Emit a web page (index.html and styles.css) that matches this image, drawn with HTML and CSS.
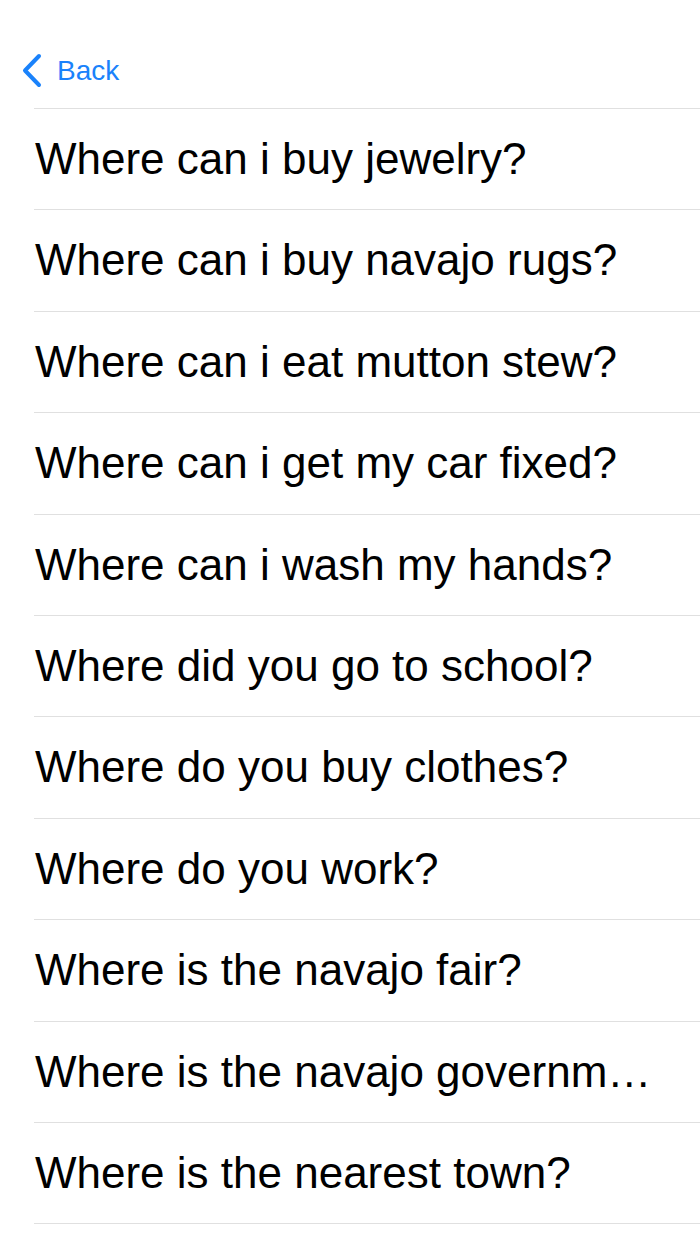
FILE: index.html
```html
<!DOCTYPE html>
<html lang="en">
<head>
<meta charset="UTF-8">
<meta name="viewport" content="width=device-width, initial-scale=1.0">
<title>Where questions</title>
<link rel="stylesheet" href="styles.css">
</head>
<body>
  <div class="navbar">
    <a class="back" href="#">
      <svg class="chevron" width="24" height="36" viewBox="0 0 24 36">
        <path d="M18 3 L4 17.5 L18 32" fill="none" stroke="#1a82fb" stroke-width="4" stroke-linecap="round" stroke-linejoin="round"/>
      </svg>
      <span>Back</span>
    </a>
  </div>
  <ul class="list">
    <li>Where can i buy jewelry?</li>
    <li>Where can i buy navajo rugs?</li>
    <li>Where can i eat mutton stew?</li>
    <li>Where can i get my car fixed?</li>
    <li>Where can i wash my hands?</li>
    <li>Where did you go to school?</li>
    <li>Where do you buy clothes?</li>
    <li>Where do you work?</li>
    <li>Where is the navajo fair?</li>
    <li>Where is the navajo government located?</li>
    <li>Where is the nearest town?</li>
  </ul>
</body>
</html>
```

FILE: styles.css
```css
body {
  margin: 0;
  background-color: #fff;
  font-family: "Liberation Sans", Arial, sans-serif;
  color: #000;
}
.navbar {
  height: 108px;
  display: flex;
  align-items: center;
  padding: 34px 0 0 21px;
  box-sizing: border-box;
}
.back {
  display: flex;
  align-items: center;
  gap: 12px;
  color: #1a82fb;
  text-decoration: none;
  font-size: 28px;
}
.chevron {
  display: block;
}
.list {
  list-style: none;
  margin: 0 0 0 34px;
  padding: 0;
  border-top: 1px solid #e0e0e0;
}
.list li {
  height: 101.4px;
  box-sizing: border-box;
  border-bottom: 1px solid #e0e0e0;
  font-size: 44px;
  line-height: 100px;
  padding: 0 46px 0 1px;
  white-space: nowrap;
  overflow: hidden;
  text-overflow: ellipsis;
}
```
